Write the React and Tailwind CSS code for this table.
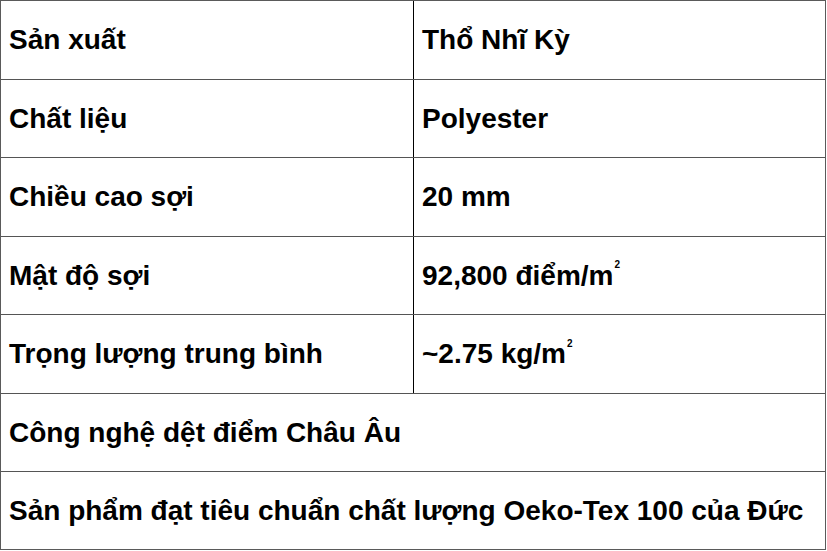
const ROWS = [
  { label: 'Sản xuất', value: 'Thổ Nhĩ Kỳ', h: 'h-[79px]' },
  { label: 'Chất liệu', value: 'Polyester', h: 'h-[78px]' },
  { label: 'Chiều cao sợi', value: '20 mm', h: 'h-[79px]' },
  { label: 'Mật độ sợi', value: '92,800 điểm/m', sup: true, h: 'h-[78px]' },
  { label: 'Trọng lượng trung bình', value: '~2.75 kg/m', sup: true, h: 'h-[79px]' },
  { label: 'Công nghệ dệt điểm Châu Âu', h: 'h-[78px]' },
  { label: 'Sản phẩm đạt tiêu chuẩn chất lượng Oeko-Tex 100 của Đức', h: 'h-[77px]' },
]

export default function App() {
  return (
    <div className="bg-white w-[827px] h-[551px] font-['Liberation_Sans',Arial,sans-serif] text-black">
      <div className="w-[826px] border border-[#5a5a5a]">
        {ROWS.map((row, i) => (
          <div
            key={i}
            className={`flex ${row.h} ${i < ROWS.length - 1 ? 'border-b border-[#555]' : ''}`}
          >
            {row.value ? (
              <>
                <div className="w-[413px] shrink-0 border-r border-black flex items-center pl-[8px] text-[28px] font-bold whitespace-nowrap">
                  {row.label}
                </div>
                <div className="flex-1 flex items-center pl-[8px] text-[28px] font-bold whitespace-nowrap">
                  {row.value}
                  {row.sup && <span className="text-[10px] self-center -mt-[22px] ml-[1px]">2</span>}
                </div>
              </>
            ) : (
              <div className="flex-1 flex items-center pl-[8px] text-[28px] font-bold whitespace-nowrap">
                {row.label}
              </div>
            )}
          </div>
        ))}
      </div>
    </div>
  )
}
